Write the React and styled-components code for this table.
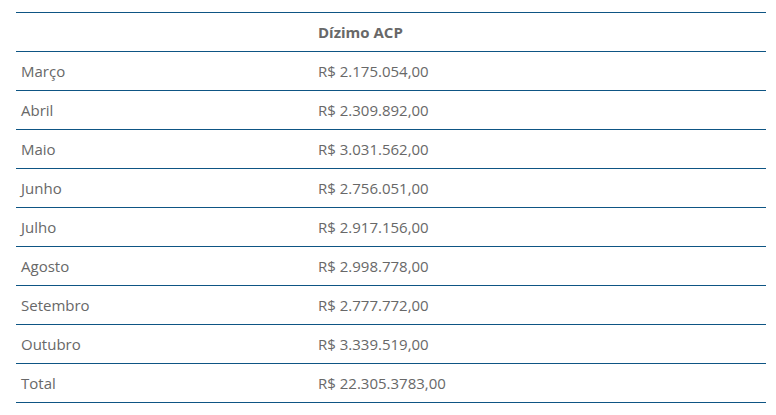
import React from "react";
import styled, { createGlobalStyle } from "styled-components";

const Global = createGlobalStyle`
  html, body { margin: 0; padding: 0; background: #fff; }
  body { font-family: "Open Sans", "Liberation Sans", sans-serif; }
`;

const Wrap = styled.div`
  padding: 12px 10px 0 16px;
`;

const Table = styled.div`
  width: 750px;
  display: flex;
  flex-direction: column;
  border-bottom: 1px solid #0e5584;
`;

const Row = styled.div`
  display: grid;
  grid-template-columns: 297px 1fr;
  height: 38px;
  border-top: 1px solid #0e5584;
  align-items: center;
`;

const Cell = styled.div`
  padding: 0 5px;
  font-size: 15px;
  color: #686868;
  font-weight: ${(p) => (p.$head ? 700 : 400)};
  white-space: nowrap;
`;

const rows = [
  ["Março", "R$ 2.175.054,00"],
  ["Abril", "R$ 2.309.892,00"],
  ["Maio", "R$ 3.031.562,00"],
  ["Junho", "R$ 2.756.051,00"],
  ["Julho", "R$ 2.917.156,00"],
  ["Agosto", "R$ 2.998.778,00"],
  ["Setembro", "R$ 2.777.772,00"],
  ["Outubro", "R$ 3.339.519,00"],
  ["Total", "R$ 22.305.3783,00"],
];

export default function App() {
  return (
    <Wrap>
      <Global />
      <Table>
        <Row>
          <Cell $head></Cell>
          <Cell $head>Dízimo ACP</Cell>
        </Row>
        {rows.map(([m, v]) => (
          <Row key={m}>
            <Cell>{m}</Cell>
            <Cell>{v}</Cell>
          </Row>
        ))}
      </Table>
    </Wrap>
  );
}
